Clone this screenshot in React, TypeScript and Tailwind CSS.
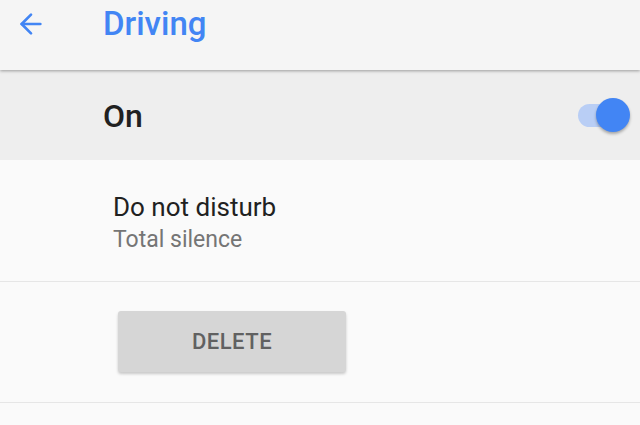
import { ArrowLeft } from 'lucide-react';

export default function App() {
  return (
    <div className="w-[640px] h-[425px] overflow-hidden bg-[#fafafa] font-['Roboto',sans-serif]">
      <div className="relative z-10 h-[70px] bg-[#f5f5f5] flex items-start shadow-[0_1px_3px_rgba(0,0,0,0.35)]">
        <ArrowLeft className="w-[32px] h-[32px] ml-[15px] mt-[8px] text-[#4285f4]" strokeWidth={2} />
        <div className="ml-[56px] mt-[2px] text-[33px] font-medium text-[#4285f4] leading-[44px]">Driving</div>
      </div>
      <div className="h-[90px] bg-[#eeeeee] flex items-center justify-between">
        <div className="ml-[103px] text-[32px] font-medium text-[#212121] leading-none mt-[2px]">On</div>
        <div className="relative w-[54px] h-[34px] mr-[10px] flex items-center">
          <div className="ml-[2px] w-[34px] h-[23px] rounded-full bg-[#b9cef5]" />
          <div className="absolute right-0 top-0 w-[34px] h-[34px] rounded-full bg-[#4285f4] shadow-[0_2px_3px_rgba(0,0,0,0.3)]" />
        </div>
      </div>
      <div className="h-[122px] border-b border-[#e6e6e6] pl-[113px] pt-[31px]">
        <div className="text-[26px] text-[#212121] leading-[32px]">Do not disturb</div>
        <div className="mt-[2px] text-[23px] text-[#757575] leading-[30px]">Total silence</div>
      </div>
      <div className="h-[121px] border-b border-[#e6e6e6] pl-[118px] pt-[29px]">
        <button className="w-[228px] h-[61px] rounded-[3px] bg-[#d6d6d6] text-[22px] font-medium text-[#616161] tracking-[0.5px] shadow-[0_2px_3px_rgba(0,0,0,0.2)]">
          DELETE
        </button>
      </div>
    </div>
  );
}
